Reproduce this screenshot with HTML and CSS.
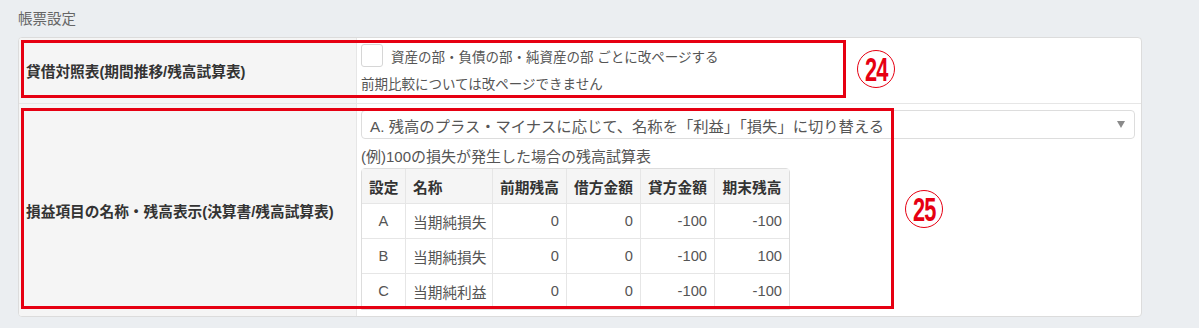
FILE: index.html
```html
<!DOCTYPE html>
<html lang="ja">
<head>
    <meta charset="UTF-8">
    <meta name="viewport" content="width=device-width, initial-scale=1.0">
    <title>帳票設定</title>
    <link rel="stylesheet" href="styles.css">
</head>
<body>

    <div class="page">
        <h2 class="section-title">帳票設定</h2>

        <div class="panel">
            <!-- 貸借対照表 -->
            <div class="row row-bs">
                <div class="row-label">貸借対照表(期間推移/残高試算表)</div>
                <div class="row-field">
                    <label class="check">
                        <span class="check-box"></span>
                        <span class="check-text">資産の部・負債の部・純資産の部 ごとに改ページする</span>
                    </label>
                    <p class="note">前期比較については改ページできません</p>
                </div>
            </div>

            <!-- 損益項目 -->
            <div class="row row-pl">
                <div class="row-label">損益項目の名称・残高表示(決算書/残高試算表)</div>
                <div class="row-field">
                    <div class="select">
                        <span>A. 残高のプラス・マイナスに応じて、名称を「利益」「損失」に切り替える</span>
                        <span class="select-arrow"></span>
                    </div>
                    <p class="caption">(例)100の損失が発生した場合の残高試算表</p>
                    <table class="sample">
                        <thead>
                            <tr>
                                <th class="c-set">設定</th>
                                <th class="c-name">名称</th>
                                <th class="c-num">前期残高</th>
                                <th class="c-num">借方金額</th>
                                <th class="c-num">貸方金額</th>
                                <th class="c-num">期末残高</th>
                            </tr>
                        </thead>
                        <tbody>
                            <tr>
                                <td class="c-set">A</td>
                                <td class="c-name">当期純損失</td>
                                <td class="c-num">0</td>
                                <td class="c-num">0</td>
                                <td class="c-num">-100</td>
                                <td class="c-num">-100</td>
                            </tr>
                            <tr>
                                <td class="c-set">B</td>
                                <td class="c-name">当期純損失</td>
                                <td class="c-num">0</td>
                                <td class="c-num">0</td>
                                <td class="c-num">-100</td>
                                <td class="c-num">100</td>
                            </tr>
                            <tr>
                                <td class="c-set">C</td>
                                <td class="c-name">当期純利益</td>
                                <td class="c-num">0</td>
                                <td class="c-num">0</td>
                                <td class="c-num">-100</td>
                                <td class="c-num">-100</td>
                            </tr>
                        </tbody>
                    </table>
                </div>
            </div>

            <!-- 注記用の赤枠と番号 -->
            <div class="frame frame-24"></div>
            <div class="frame frame-25"></div>
            <div class="mark mark-24"><span>24</span></div>
            <div class="mark mark-25"><span>25</span></div>
        </div>
    </div>

</body>
</html>
```

FILE: styles.css
```css
* {
    margin: 0;
    padding: 0;
    box-sizing: border-box;
}

body {
    background-color: #ebeef1;
    font-family: "Liberation Sans", "Noto Sans CJK JP", sans-serif;
    color: #555;
    font-size: 15px;
}

.page {
    padding: 9px 0 0 18px;
}

.section-title {
    font-size: 14.5px;
    font-weight: normal;
    color: #666;
    line-height: 20px;
    margin-bottom: 8px;
}

.panel {
    position: relative;
    width: 1124px;
    background-color: #fff;
    border: 1px solid #dcdcdc;
    border-radius: 4px;
    overflow: hidden;
}

.row {
    display: flex;
}

.row-bs {
    border-bottom: 1px solid #e6e6e6;
    height: 66px;
}

.row-label {
    width: 338px;
    flex-shrink: 0;
    display: flex;
    align-items: center;
    padding-left: 7px;
    background-color: #f5f5f5;
    border-right: 1px solid #e6e6e6;
    font-size: 14.7px;
    font-weight: bold;
    color: #333;
}

.row-field {
    flex: 1;
    padding: 6px 6px 6px 4px;
}

.check {
    display: flex;
    align-items: center;
    gap: 8px;
    height: 23px;
}

.check-box {
    width: 22px;
    height: 23px;
    border: 1px solid #d6d6d6;
    border-radius: 3px;
    background-color: #fff;
}

.check-text {
    font-size: 13.5px;
}

.note {
    font-size: 13.5px;
    line-height: 20px;
    margin-top: 8px;
}

.select {
    display: flex;
    justify-content: space-between;
    align-items: center;
    height: 29px;
    padding: 0 9px 0 8px;
    border: 1px solid #ddd;
    border-radius: 4px;
    background-color: #fff;
    font-size: 15.3px;
}

.select-arrow {
    width: 0;
    height: 0;
    border-left: 4.5px solid transparent;
    border-right: 4.5px solid transparent;
    border-top: 7px solid #8a8a8a;
}

.caption {
    font-size: 15px;
    line-height: 20px;
    margin-top: 8px;
}

.sample {
    margin-top: 1px;
    border-collapse: separate;
    border-spacing: 0;
    table-layout: fixed;
    width: 427px;
    border: 1px solid #ddd;
    border-radius: 4px 4px 0 0;
    font-size: 14.7px;
}

.sample th,
.sample td {
    height: 35px;
    padding: 0 7px;
    border-right: 1px solid #e6e6e6;
    border-bottom: 1px solid #e6e6e6;
    white-space: nowrap;
}

.sample th:last-child,
.sample td:last-child {
    border-right: none;
}

.sample th {
    background-color: #f5f5f5;
    color: #333;
    font-weight: bold;
    text-align: left;
}

.sample th.c-num {
    text-align: center;
}

.sample td.c-set {
    text-align: center;
}

.sample td.c-num {
    text-align: right;
}

.c-set { width: 44px; }
.c-name { width: 87px; }
.c-num { width: 74px; }

/* 注記 */
.frame {
    position: absolute;
    border: 3px solid #e60012;
}

.frame-24 {
    left: 2px;
    top: 2px;
    width: 825px;
    height: 58px;
}

.frame-25 {
    left: 2px;
    top: 70px;
    width: 873px;
    height: 201px;
}

.mark {
    position: absolute;
    width: 38px;
    height: 38px;
    border: 1.5px solid #e60012;
    border-radius: 50%;
    display: flex;
    justify-content: center;
    align-items: center;
    color: #e60012;
    font-family: "Liberation Sans", Arial, sans-serif;
    font-weight: bold;
    font-size: 33px;
    line-height: 1;
}

.mark span {
    display: block;
    transform: scaleX(0.66);
    letter-spacing: -1px;
}

.mark-24 {
    left: 838px;
    top: 12px;
}

.mark-25 {
    left: 886px;
    top: 152px;
}
```
